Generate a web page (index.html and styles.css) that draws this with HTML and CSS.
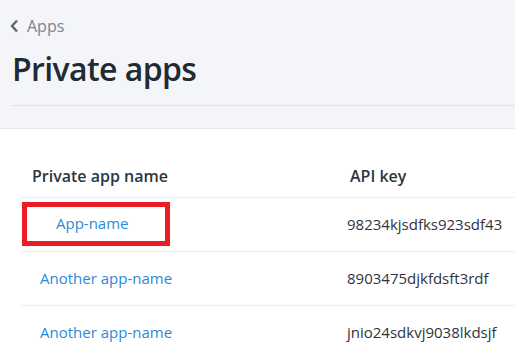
FILE: index.html
```html
<!DOCTYPE html>
<html lang="en">
<head>
  <meta charset="UTF-8">
  <title>Private apps</title>
  <link rel="stylesheet" href="styles.css">
</head>
<body>
  <header class="page-header">
    <a class="breadcrumb" href="#">
      <svg width="9" height="14" viewBox="0 0 9 14"><path d="M7 1.5 L2 7 L7 12.5" fill="none" stroke="#5f6670" stroke-width="2.4"/></svg>
      Apps
    </a>
    <h1>Private apps</h1>
  </header>

  <div class="content">
    <table class="apps-table">
      <thead>
        <tr>
          <th class="col-name">Private app name</th>
          <th class="col-key">API key</th>
        </tr>
      </thead>
      <tbody>
        <tr>
          <td class="col-name marked"><a class="highlight" href="#">App-name</a></td>
          <td class="col-key">98234kjsdfks923sdf43</td>
        </tr>
        <tr>
          <td class="col-name"><a href="#">Another app-name</a></td>
          <td class="col-key">8903475djkfdsft3rdf</td>
        </tr>
        <tr>
          <td class="col-name"><a href="#">Another app-name</a></td>
          <td class="col-key">jnio24sdkvj9038lkdsjf</td>
        </tr>
      </tbody>
    </table>
  </div>
</body>
</html>
```

FILE: styles.css
```css
body {
  margin: 0;
  font-family: 'Open Sans', 'Noto Sans', sans-serif;
  background-color: #fff;
  color: #2e3540;
}

.page-header {
  background-color: #f4f5f8;
  padding: 14px 0 22px 10px;
  border-bottom: 1px solid #e8e9ec;
}

.breadcrumb {
  display: flex;
  align-items: center;
  gap: 8px;
  color: #7b848f;
  font-size: 16px;
  text-decoration: none;
  height: 24px;
}

.page-header h1 {
  margin: 0;
  padding: 9px 0 14px 2px;
  font-size: 32px;
  font-weight: 600;
  line-height: 44px;
  letter-spacing: -0.6px;
  color: #222a33;
  border-bottom: 1px solid #e2e4e8;
}

.content {
  padding: 0 0 0 20px;
}

.apps-table {
  width: 100%;
  border-collapse: collapse;
  table-layout: fixed;
}

.apps-table th,
.apps-table td {
  box-sizing: border-box;
  border-bottom: 1px solid #eceef0;
  vertical-align: middle;
  text-align: left;
}

.apps-table th {
  font-size: 16px;
  font-weight: 600;
  color: #2e3540;
  line-height: 22px;
  padding: 36px 0 10px;
}

.apps-table td {
  font-size: 15px;
  line-height: 21px;
  padding: 16px 0;
}

.apps-table .col-name {
  width: 315px;
  padding-left: 20px;
}

.apps-table th.col-name {
  padding-left: 12px;
}

.apps-table td.marked {
  padding: 3px 0 4px 2px;
}

.apps-table .col-key {
  padding-left: 12px;
}

.apps-table th.col-key {
  padding-left: 15px;
}

.apps-table a {
  color: #2b8ad8;
  text-decoration: none;
}

.apps-table a.highlight {
  display: block;
  box-sizing: border-box;
  width: 148px;
  height: 44px;
  padding-left: 29px;
  border: 5px solid #ec1c24;
  line-height: 32px;
}
```
